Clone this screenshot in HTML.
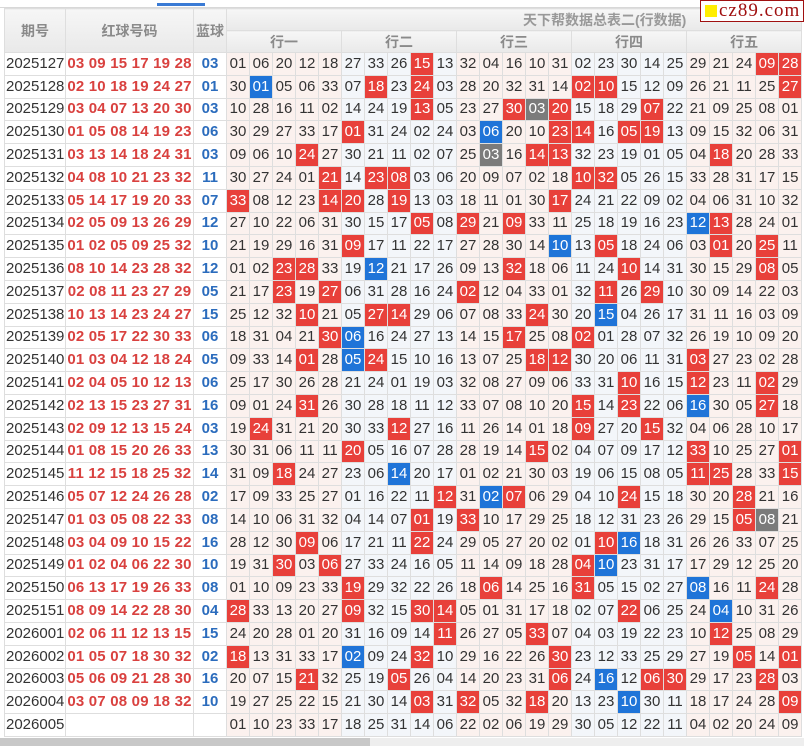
<!DOCTYPE html>
<html><head><meta charset="utf-8">
<style>
body{margin:0;width:804px;height:746px;overflow:hidden;background:#fff;font-family:"Liberation Sans","Noto Sans CJK SC",sans-serif;position:relative}
.tab{position:absolute;left:157px;top:3px;width:48px;height:3px;background:#3a7bd5}
.topline{position:absolute;left:0;top:7px;width:804px;height:1px;background:#d8d8d8}
.logo{position:absolute;left:700px;top:0;width:102px;height:20px;border:1px solid #a01010;background:#fff;font-family:"Liberation Serif",serif;font-size:19px;color:#a01010;line-height:20px;letter-spacing:1px}
.logo i{display:inline-block;width:12px;height:12px;background:#ffee00;margin:0 2px 0 4px;vertical-align:-1px}
table{position:absolute;left:4px;top:8px;border-collapse:collapse;table-layout:fixed;width:797px}
td,th{padding:0;text-align:center;white-space:nowrap;overflow:hidden;border:1px solid #dedede}
th{background:linear-gradient(#f6f6f6,#e9e9e9);color:#8a8a8a;font-size:14px;font-weight:bold;height:21px}
th.t{text-align:left;padding-left:296px;color:#999}
tbody td{height:21.8px;line-height:18px;font-size:15px;color:#333}
td.q{text-align:left;padding-left:1px;font-size:15px;color:#333;background:#fff}
td.rd{color:#d9413f;font-weight:bold;font-size:15px;letter-spacing:.2px;background:#fff}
td.bl{color:#2b6cbd;font-weight:bold;background:#fff}
tbody td:nth-child(n+4){background:#fbf1ee}
tbody td:nth-child(n+9):nth-child(-n+13),tbody td:nth-child(n+19):nth-child(-n+23){background:#f3f6fa}
tbody td:nth-child(4),tbody td:nth-child(9),tbody td:nth-child(14),tbody td:nth-child(19),tbody td:nth-child(24){border-left:1px solid #000}
tbody td.R{background:#e8403a!important;color:#fff}
tbody td.B{background:#1f74d8!important;color:#fff}
tbody td.G{background:#7b7b7b!important;color:#fff}
.sb{position:absolute;left:0;top:738px;width:370px;height:8px;background:#c8c8c8}
.sb2{position:absolute;left:370px;top:738px;width:434px;height:8px;background:#eee}
</style></head><body>
<div class="topline"></div><div class="tab"></div>
<table>
<colgroup><col style="width:61px"><col style="width:128px"><col style="width:33px"><col span="25" style="width:23px"></colgroup>
<thead>
<tr><th rowspan="2">期号</th><th rowspan="2">红球号码</th><th rowspan="2">蓝球</th><th colspan="25" class="t">天下帮数据总表二(行数据)</th></tr>
<tr><th colspan="5">行一</th><th colspan="5">行二</th><th colspan="5">行三</th><th colspan="5">行四</th><th colspan="5">行五</th></tr>
</thead>
<tbody>
<tr><td class="q">2025127</td><td class="rd">03 09 15 17 19 28</td><td class="bl">03</td><td>01</td><td>06</td><td>20</td><td>12</td><td>18</td><td>27</td><td>33</td><td>26</td><td class="R">15</td><td>13</td><td>32</td><td>04</td><td>16</td><td>10</td><td>31</td><td>02</td><td>23</td><td>30</td><td>14</td><td>25</td><td>29</td><td>21</td><td>24</td><td class="R">09</td><td class="R">28</td></tr>
<tr><td class="q">2025128</td><td class="rd">02 10 18 19 24 27</td><td class="bl">01</td><td>30</td><td class="B">01</td><td>05</td><td>06</td><td>33</td><td>07</td><td class="R">18</td><td>23</td><td class="R">24</td><td>03</td><td>28</td><td>20</td><td>32</td><td>31</td><td>14</td><td class="R">02</td><td class="R">10</td><td>15</td><td>12</td><td>09</td><td>26</td><td>21</td><td>11</td><td>25</td><td class="R">27</td></tr>
<tr><td class="q">2025129</td><td class="rd">03 04 07 13 20 30</td><td class="bl">03</td><td>10</td><td>28</td><td>16</td><td>11</td><td>02</td><td>14</td><td>24</td><td>19</td><td class="R">13</td><td>05</td><td>23</td><td>27</td><td class="R">30</td><td class="G">03</td><td class="R">20</td><td>15</td><td>18</td><td>29</td><td class="R">07</td><td>22</td><td>21</td><td>09</td><td>25</td><td>08</td><td>01</td></tr>
<tr><td class="q">2025130</td><td class="rd">01 05 08 14 19 23</td><td class="bl">06</td><td>30</td><td>29</td><td>27</td><td>33</td><td>17</td><td class="R">01</td><td>31</td><td>24</td><td>02</td><td>24</td><td>03</td><td class="B">06</td><td>20</td><td>10</td><td class="R">23</td><td class="R">14</td><td>16</td><td class="R">05</td><td class="R">19</td><td>13</td><td>09</td><td>15</td><td>32</td><td>06</td><td>31</td></tr>
<tr><td class="q">2025131</td><td class="rd">03 13 14 18 24 31</td><td class="bl">03</td><td>09</td><td>06</td><td>10</td><td class="R">24</td><td>27</td><td>30</td><td>21</td><td>11</td><td>02</td><td>07</td><td>25</td><td class="G">03</td><td>16</td><td class="R">14</td><td class="R">13</td><td>32</td><td>23</td><td>19</td><td>01</td><td>05</td><td>04</td><td class="R">18</td><td>20</td><td>28</td><td>33</td></tr>
<tr><td class="q">2025132</td><td class="rd">04 08 10 21 23 32</td><td class="bl">11</td><td>30</td><td>27</td><td>24</td><td>01</td><td class="R">21</td><td>14</td><td class="R">23</td><td class="R">08</td><td>03</td><td>06</td><td>20</td><td>09</td><td>07</td><td>02</td><td>18</td><td class="R">10</td><td class="R">32</td><td>05</td><td>26</td><td>15</td><td>33</td><td>28</td><td>31</td><td>17</td><td>15</td></tr>
<tr><td class="q">2025133</td><td class="rd">05 14 17 19 20 33</td><td class="bl">07</td><td class="R">33</td><td>08</td><td>12</td><td>23</td><td class="R">14</td><td class="R">20</td><td>28</td><td class="R">19</td><td>13</td><td>03</td><td>18</td><td>11</td><td>01</td><td>30</td><td class="R">17</td><td>24</td><td>21</td><td>22</td><td>09</td><td>02</td><td>04</td><td>06</td><td>31</td><td>10</td><td>32</td></tr>
<tr><td class="q">2025134</td><td class="rd">02 05 09 13 26 29</td><td class="bl">12</td><td>27</td><td>10</td><td>22</td><td>06</td><td>31</td><td>30</td><td>15</td><td>17</td><td class="R">05</td><td>08</td><td class="R">29</td><td>21</td><td class="R">09</td><td>33</td><td>11</td><td>25</td><td>18</td><td>19</td><td>16</td><td>23</td><td class="B">12</td><td class="R">13</td><td>28</td><td>24</td><td>01</td></tr>
<tr><td class="q">2025135</td><td class="rd">01 02 05 09 25 32</td><td class="bl">10</td><td>21</td><td>19</td><td>29</td><td>16</td><td>31</td><td class="R">09</td><td>17</td><td>11</td><td>22</td><td>17</td><td>27</td><td>28</td><td>30</td><td>14</td><td class="B">10</td><td>13</td><td class="R">05</td><td>18</td><td>24</td><td>06</td><td>03</td><td class="R">01</td><td>20</td><td class="R">25</td><td>11</td></tr>
<tr><td class="q">2025136</td><td class="rd">08 10 14 23 28 32</td><td class="bl">12</td><td>01</td><td>02</td><td class="R">23</td><td class="R">28</td><td>33</td><td>19</td><td class="B">12</td><td>21</td><td>17</td><td>26</td><td>09</td><td>13</td><td class="R">32</td><td>18</td><td>06</td><td>11</td><td>24</td><td class="R">10</td><td>14</td><td>31</td><td>30</td><td>15</td><td>29</td><td class="R">08</td><td>05</td></tr>
<tr><td class="q">2025137</td><td class="rd">02 08 11 23 27 29</td><td class="bl">05</td><td>21</td><td>17</td><td class="R">23</td><td>19</td><td class="R">27</td><td>06</td><td>31</td><td>28</td><td>16</td><td>24</td><td class="R">02</td><td>12</td><td>04</td><td>33</td><td>01</td><td>32</td><td class="R">11</td><td>26</td><td class="R">29</td><td>10</td><td>30</td><td>09</td><td>14</td><td>22</td><td>03</td></tr>
<tr><td class="q">2025138</td><td class="rd">10 13 14 23 24 27</td><td class="bl">15</td><td>25</td><td>12</td><td>32</td><td class="R">10</td><td>21</td><td>05</td><td class="R">27</td><td class="R">14</td><td>29</td><td>06</td><td>07</td><td>08</td><td>33</td><td class="R">24</td><td>30</td><td>20</td><td class="B">15</td><td>04</td><td>26</td><td>17</td><td>31</td><td>11</td><td>16</td><td>03</td><td>09</td></tr>
<tr><td class="q">2025139</td><td class="rd">02 05 17 22 30 33</td><td class="bl">06</td><td>18</td><td>31</td><td>04</td><td>21</td><td class="R">30</td><td class="B">06</td><td>16</td><td>24</td><td>27</td><td>13</td><td>14</td><td>15</td><td class="R">17</td><td>25</td><td>08</td><td class="R">02</td><td>01</td><td>28</td><td>07</td><td>32</td><td>26</td><td>19</td><td>10</td><td>09</td><td>20</td></tr>
<tr><td class="q">2025140</td><td class="rd">01 03 04 12 18 24</td><td class="bl">05</td><td>09</td><td>33</td><td>14</td><td class="R">01</td><td>28</td><td class="B">05</td><td class="R">24</td><td>15</td><td>10</td><td>16</td><td>13</td><td>07</td><td>25</td><td class="R">18</td><td class="R">12</td><td>30</td><td>20</td><td>06</td><td>11</td><td>31</td><td class="R">03</td><td>27</td><td>23</td><td>02</td><td>28</td></tr>
<tr><td class="q">2025141</td><td class="rd">02 04 05 10 12 13</td><td class="bl">06</td><td>25</td><td>17</td><td>30</td><td>26</td><td>28</td><td>21</td><td>24</td><td>01</td><td>19</td><td>03</td><td>32</td><td>08</td><td>27</td><td>09</td><td>06</td><td>33</td><td>31</td><td class="R">10</td><td>16</td><td>15</td><td class="R">12</td><td>23</td><td>11</td><td class="R">02</td><td>29</td></tr>
<tr><td class="q">2025142</td><td class="rd">02 13 15 23 27 31</td><td class="bl">16</td><td>09</td><td>01</td><td>24</td><td class="R">31</td><td>26</td><td>30</td><td>28</td><td>18</td><td>11</td><td>12</td><td>33</td><td>07</td><td>08</td><td>10</td><td>20</td><td class="R">15</td><td>14</td><td class="R">23</td><td>22</td><td>06</td><td class="B">16</td><td>30</td><td>05</td><td class="R">27</td><td>18</td></tr>
<tr><td class="q">2025143</td><td class="rd">02 09 12 13 15 24</td><td class="bl">03</td><td>19</td><td class="R">24</td><td>31</td><td>21</td><td>20</td><td>30</td><td>33</td><td class="R">12</td><td>27</td><td>16</td><td>11</td><td>26</td><td>14</td><td>01</td><td>18</td><td class="R">09</td><td>27</td><td>20</td><td class="R">15</td><td>32</td><td>04</td><td>06</td><td>28</td><td>10</td><td>17</td></tr>
<tr><td class="q">2025144</td><td class="rd">01 08 15 20 26 33</td><td class="bl">13</td><td>30</td><td>31</td><td>06</td><td>11</td><td>11</td><td class="R">20</td><td>05</td><td>16</td><td>07</td><td>28</td><td>28</td><td>19</td><td>14</td><td class="R">15</td><td>02</td><td>04</td><td>07</td><td>09</td><td>17</td><td>12</td><td class="R">33</td><td>10</td><td>25</td><td>27</td><td class="R">01</td></tr>
<tr><td class="q">2025145</td><td class="rd">11 12 15 18 25 32</td><td class="bl">14</td><td>31</td><td>09</td><td class="R">18</td><td>24</td><td>27</td><td>23</td><td>06</td><td class="B">14</td><td>20</td><td>17</td><td>01</td><td>02</td><td>21</td><td>30</td><td>03</td><td>19</td><td>06</td><td>15</td><td>08</td><td>05</td><td class="R">11</td><td class="R">25</td><td>28</td><td>33</td><td class="R">15</td></tr>
<tr><td class="q">2025146</td><td class="rd">05 07 12 24 26 28</td><td class="bl">02</td><td>17</td><td>09</td><td>33</td><td>25</td><td>27</td><td>01</td><td>16</td><td>22</td><td>11</td><td class="R">12</td><td>31</td><td class="B">02</td><td class="R">07</td><td>06</td><td>29</td><td>04</td><td>10</td><td class="R">24</td><td>15</td><td>18</td><td>30</td><td>20</td><td class="R">28</td><td>21</td><td>16</td></tr>
<tr><td class="q">2025147</td><td class="rd">01 03 05 08 22 33</td><td class="bl">08</td><td>14</td><td>10</td><td>06</td><td>31</td><td>32</td><td>04</td><td>14</td><td>07</td><td class="R">01</td><td>19</td><td class="R">33</td><td>10</td><td>17</td><td>29</td><td>25</td><td>18</td><td>12</td><td>31</td><td>23</td><td>26</td><td>29</td><td>15</td><td class="R">05</td><td class="G">08</td><td>21</td></tr>
<tr><td class="q">2025148</td><td class="rd">03 04 09 10 15 22</td><td class="bl">16</td><td>28</td><td>12</td><td>30</td><td class="R">09</td><td>06</td><td>17</td><td>21</td><td>11</td><td class="R">22</td><td>24</td><td>29</td><td>05</td><td>27</td><td>20</td><td>02</td><td>01</td><td class="R">10</td><td class="B">16</td><td>18</td><td>31</td><td>26</td><td>26</td><td>33</td><td>07</td><td>25</td></tr>
<tr><td class="q">2025149</td><td class="rd">01 02 04 06 22 30</td><td class="bl">10</td><td>19</td><td>31</td><td class="R">30</td><td>03</td><td class="R">06</td><td>27</td><td>33</td><td>24</td><td>16</td><td>05</td><td>11</td><td>14</td><td>09</td><td>18</td><td>28</td><td class="R">04</td><td class="B">10</td><td>23</td><td>31</td><td>17</td><td>17</td><td>29</td><td>12</td><td>25</td><td>20</td></tr>
<tr><td class="q">2025150</td><td class="rd">06 13 17 19 26 33</td><td class="bl">08</td><td>01</td><td>10</td><td>09</td><td>23</td><td>33</td><td class="R">19</td><td>29</td><td>32</td><td>22</td><td>26</td><td>18</td><td class="R">06</td><td>14</td><td>25</td><td>16</td><td class="R">31</td><td>05</td><td>15</td><td>02</td><td>27</td><td class="B">08</td><td>16</td><td>11</td><td class="R">24</td><td>28</td></tr>
<tr><td class="q">2025151</td><td class="rd">08 09 14 22 28 30</td><td class="bl">04</td><td class="R">28</td><td>33</td><td>13</td><td>20</td><td>27</td><td class="R">09</td><td>32</td><td>15</td><td class="R">30</td><td class="R">14</td><td>05</td><td>01</td><td>31</td><td>17</td><td>18</td><td>02</td><td>07</td><td class="R">22</td><td>06</td><td>25</td><td>24</td><td class="B">04</td><td>10</td><td>31</td><td>26</td></tr>
<tr><td class="q">2026001</td><td class="rd">02 06 11 12 13 15</td><td class="bl">15</td><td>24</td><td>20</td><td>28</td><td>01</td><td>20</td><td>31</td><td>16</td><td>09</td><td>14</td><td class="R">11</td><td>26</td><td>27</td><td>05</td><td class="R">33</td><td>07</td><td>04</td><td>03</td><td>19</td><td>22</td><td>23</td><td>10</td><td class="R">12</td><td>25</td><td>08</td><td>29</td></tr>
<tr><td class="q">2026002</td><td class="rd">01 05 07 18 30 32</td><td class="bl">02</td><td class="R">18</td><td>13</td><td>31</td><td>33</td><td>17</td><td class="B">02</td><td>09</td><td>24</td><td class="R">32</td><td>10</td><td>29</td><td>16</td><td>22</td><td>26</td><td class="R">30</td><td>23</td><td>12</td><td>33</td><td>25</td><td>29</td><td>27</td><td>19</td><td class="R">05</td><td>14</td><td class="R">01</td></tr>
<tr><td class="q">2026003</td><td class="rd">05 06 09 21 28 30</td><td class="bl">16</td><td>20</td><td>07</td><td>15</td><td class="R">21</td><td>32</td><td>25</td><td>19</td><td class="R">05</td><td>26</td><td>04</td><td>14</td><td>20</td><td>23</td><td>31</td><td class="R">06</td><td>24</td><td class="B">16</td><td>12</td><td class="R">06</td><td class="R">30</td><td>29</td><td>17</td><td>23</td><td class="R">28</td><td>03</td></tr>
<tr><td class="q">2026004</td><td class="rd">03 07 08 09 18 32</td><td class="bl">10</td><td>19</td><td>27</td><td>25</td><td>22</td><td>15</td><td>21</td><td>30</td><td>14</td><td class="R">03</td><td>31</td><td class="R">32</td><td>05</td><td>32</td><td class="R">18</td><td>20</td><td>13</td><td>23</td><td class="B">10</td><td>30</td><td>11</td><td>18</td><td>17</td><td>24</td><td>28</td><td class="R">09</td></tr>
<tr><td class="q">2026005</td><td class="rd"></td><td class="bl"></td><td>01</td><td>10</td><td>23</td><td>33</td><td>17</td><td>18</td><td>25</td><td>31</td><td>14</td><td>06</td><td>22</td><td>02</td><td>06</td><td>19</td><td>29</td><td>30</td><td>05</td><td>12</td><td>22</td><td>11</td><td>04</td><td>02</td><td>20</td><td>24</td><td>09</td></tr>
</tbody>
</table>
<div class="logo"><i></i>cz89.com</div>
<div class="sb"></div><div class="sb2"></div>
</body></html>
